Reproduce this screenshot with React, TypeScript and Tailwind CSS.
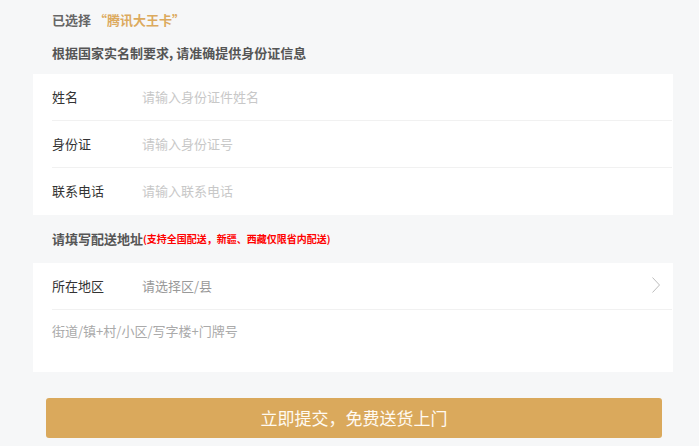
import React from "react";

const font = { fontFamily: '"Noto Sans CJK SC", "Noto Sans", sans-serif' };

function Row({ label, placeholder, last }: { label: string; placeholder: string; last?: boolean }) {
  return (
    <div className="h-[47px] pl-[19px] pr-[1px]">
      <div className={`h-full flex items-center pb-[2px] ${last ? "" : "border-b border-[#f1f1f1]"}`}>
        <span className="w-[90px] text-[13px] leading-[19px] text-[#333]">{label}</span>
        <span className="text-[13px] leading-[19px] text-[#c8c8c8]">{placeholder}</span>
      </div>
    </div>
  );
}

export default function App() {
  return (
    <div className="w-[699px] h-[446px] bg-[#f6f7f8] overflow-hidden" style={font}>
      <div className="h-[74px] pl-[52px] pt-[10px]">
        <div className="text-[13px] leading-[19px] font-bold text-[#666]">
          已选择 <span className="text-[#dcaa5e]">“腾讯大王卡”</span>
        </div>
        <div className="mt-[14px] text-[13px] leading-[19px] font-bold text-[#555]">
          根据国家实名制要求, 请准确提供身份证信息
        </div>
      </div>
      <div className="ml-[33px] w-[640px] bg-white">
        <Row label="姓名" placeholder="请输入身份证件姓名" />
        <Row label="身份证" placeholder="请输入身份证号" />
        <Row label="联系电话" placeholder="请输入联系电话" last />
      </div>
      <div className="h-[48px] pl-[52px] flex items-center pb-[1px]">
        <span className="text-[13px] leading-[19px] font-bold text-[#555]">请填写配送地址</span>
        <span className="text-[10px] leading-[19px] font-bold text-[#f00]">(支持全国配送，新疆、西藏仅限省内配送)</span>
      </div>
      <div className="ml-[33px] w-[640px] bg-white">
        <div className="h-[47px] pl-[19px] pr-[1px]">
          <div className="h-full flex items-center pb-[2px] border-b border-[#f1f1f1]">
            <span className="w-[90px] text-[13px] leading-[19px] text-[#333]">所在地区</span>
            <span className="flex-1 text-[13px] leading-[19px] text-[#999]">请选择区/县</span>
            <svg width="10" height="18" viewBox="0 0 10 18" className="mr-[11px]">
              <polyline points="1.5,1.5 8.5,9 1.5,16.5" fill="none" stroke="#bdbdbd" strokeWidth="1" />
            </svg>
          </div>
        </div>
        <div className="h-[62px] pl-[19px] pt-[11px]">
          <div className="text-[13px] leading-[19px] text-[#aaa]">街道/镇+村/小区/写字楼+门牌号</div>
        </div>
      </div>
      <div className="pt-[26px] pl-[46px]">
        <button className="w-[616px] h-[40px] rounded-[3px] bg-[#daa95c] text-[17px] leading-[24px] text-[#fffaf2] flex items-center justify-center pb-[1px]">
          立即提交，免费送货上门
        </button>
      </div>
    </div>
  );
}
